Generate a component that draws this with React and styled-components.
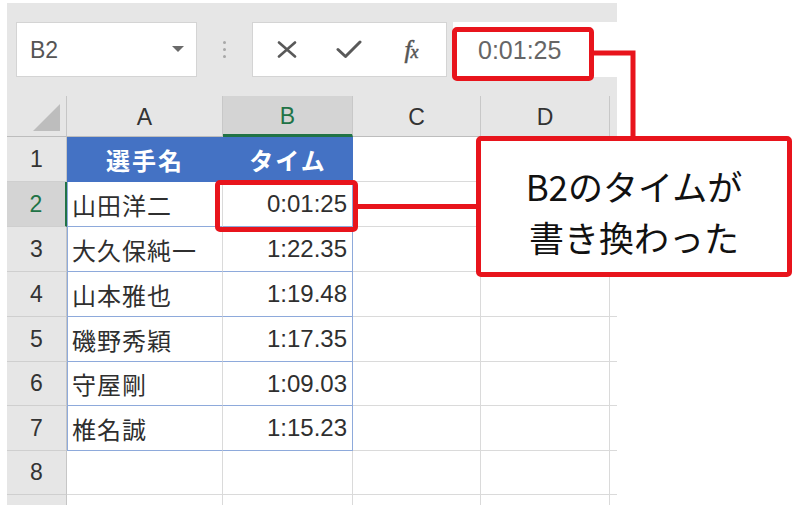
import React from "react";
import styled, { createGlobalStyle, css } from "styled-components";

const RED = "#e8141c";
const GREEN = "#217346";
const GRID = "#dadada";
const TBL = "#8eaadb";

const GlobalStyle = createGlobalStyle`
  html, body { margin: 0; padding: 0; background: #fff; }
  body { font-family: "Liberation Sans", "Noto Sans CJK JP", sans-serif; }
  #root { width: 800px; height: 505px; }
`;

const Stage = styled.div`
  position: relative;
  width: 800px;
  height: 505px;
  overflow: hidden;
  padding: 3px 0 0 7px;
  box-sizing: border-box;
  background: #fff;
`;

const Sheet = styled.div`
  width: 610px;
  display: flex;
  flex-direction: column;
`;

const TopBar = styled.div`
  height: 93px;
  box-sizing: border-box;
  background: #e6e6e6;
  display: flex;
  align-items: flex-start;
  padding: 19px 0 0 9px;
`;

const NameBox = styled.div`
  width: 181px;
  height: 55px;
  box-sizing: border-box;
  background: #fff;
  border: 1px solid #d4d4d4;
  display: flex;
  align-items: center;
  justify-content: space-between;
  padding: 2px 12px 0 13px;
  font-size: 23px;
  color: #555;
`;

const DropArrow = styled.span`
  width: 0;
  height: 0;
  border-left: 6px solid transparent;
  border-right: 6px solid transparent;
  border-top: 6px solid #6a6a6a;
  margin-top: -4px;
`;

const Dots = styled.div`
  width: 55px;
  height: 55px;
  display: flex;
  flex-direction: column;
  align-items: center;
  justify-content: center;
  gap: 4px;
  & > span {
    width: 3px;
    height: 3px;
    border-radius: 50%;
    background: #a8a8a8;
  }
`;

const FxBox = styled.div`
  width: 195px;
  height: 55px;
  box-sizing: border-box;
  background: #fff;
  border: 1px solid #d4d4d4;
  display: flex;
  align-items: center;
  padding-left: 3px;
`;

const IconSlot = styled.div`
  width: 62px;
  height: 100%;
  display: flex;
  align-items: center;
  justify-content: center;
  color: #5a5a5a;
`;

const FxText = styled.span`
  font-family: "Liberation Serif", "DejaVu Serif", serif;
  font-style: italic;
  font-size: 25px;
  color: #555;
  letter-spacing: -1px;
  -webkit-text-stroke: 0.5px #555;
  & > small { font-size: 18px; }
`;

const FormulaInput = styled.div`
  flex: 1;
  margin-left: 6px;
  height: 55px;
  background: #fff;
  display: flex;
  align-items: center;
  padding: 2px 0 0 25px;
  box-sizing: border-box;
  font-size: 25px;
  color: #666;
`;

const Grid = styled.div`
  display: grid;
  grid-template-columns: 60px 156px 130px 128px 129px 7px;
  grid-template-rows: 41px 45px 45px 45px 45px 45px 44px 45px 44px 20px;
`;

const base = css`
  box-sizing: border-box;
  display: flex;
  align-items: center;
  overflow: hidden;
  white-space: nowrap;
`;

const Corner = styled.div`
  ${base};
  background: #e6e6e6;
  border-right: 1px solid #c6c6c6;
  border-bottom: 1px solid #bdbdbd;
  justify-content: flex-end;
  align-items: flex-end;
  padding: 0 6px 5px 0;
  &::after {
    content: "";
    width: 27px;
    height: 27px;
    background: #bdbdbd;
    clip-path: polygon(100% 0, 100% 100%, 0 100%);
  }
`;

const ColHead = styled.div`
  ${base};
  justify-content: center;
  font-size: 23px;
  padding-top: 2px;
  background: ${(p) => (p.$active ? "#d4d4d4" : "#e6e6e6")};
  color: ${(p) => (p.$active ? GREEN : "#333")};
  border-right: ${(p) => (p.$last ? "none" : "1px solid #c8c8c8")};
  border-bottom: ${(p) =>
    p.$active ? `3px solid ${GREEN}` : "1px solid #bdbdbd"};
`;

const RowHead = styled.div`
  ${base};
  justify-content: center;
  font-size: 23px;
  background: ${(p) => (p.$active ? "#d4d4d4" : "#e6e6e6")};
  color: ${(p) => (p.$active ? GREEN : "#333")};
  border-right: ${(p) =>
    p.$active ? `2px solid ${GREEN}` : "1px solid #c6c6c6"};
  border-bottom: 1px solid #cfcfcf;
`;

const Cell = styled.div`
  ${base};
  background: #fff;
  border-right: ${(p) => (p.$last ? "none" : `1px solid ${GRID}`)};
  border-bottom: 1px solid ${GRID};
`;

const Th = styled.div`
  ${base};
  justify-content: center;
  background: #4472c4;
  color: #fff;
  font-weight: 700;
  font-size: 24px;
  letter-spacing: 2px;
  font-family: "Noto Sans CJK JP", sans-serif;
  border-bottom: 1px solid #4472c4;
`;

const Td = styled.div`
  ${base};
  background: #fff;
  font-size: 24px;
  color: #2f2f2f;
  font-family: "Liberation Sans", "Noto Sans CJK JP", sans-serif;
  border-bottom: 1px solid ${TBL};
  ${(p) =>
    p.$num
      ? css`
          justify-content: flex-end;
          padding-right: 5px;
          border-right: 1px solid ${TBL};
        `
      : css`
          justify-content: flex-start;
          padding-left: 5px;
          letter-spacing: 1px;
          border-right: 1px solid ${GRID};
          box-shadow: inset 1px 0 0 ${TBL};
        `}
`;

const Mark = styled.div`
  position: absolute;
  box-sizing: border-box;
  border: 5px solid ${RED};
  border-radius: 5px;
  left: ${(p) => p.$x}px;
  top: ${(p) => p.$y}px;
  width: ${(p) => p.$w}px;
  height: ${(p) => p.$h}px;
`;

const Callout = styled(Mark)`
  background: #fff;
  display: flex;
  align-items: center;
  justify-content: center;
  padding-top: 8px;
`;

const CalloutText = styled.p`
  margin: 0;
  text-align: center;
  font-family: "Noto Sans CJK JP", sans-serif;
  font-size: 35px;
  line-height: 51px;
  color: #111;
`;

const Wires = styled.svg`
  position: absolute;
  left: 0;
  top: 0;
  pointer-events: none;
`;

const rows = [
  ["山田洋二", "0:01:25"],
  ["大久保純一", "1:22.35"],
  ["山本雅也", "1:19.48"],
  ["磯野秀穎", "1:17.35"],
  ["守屋剛", "1:09.03"],
  ["椎名誠", "1:15.23"],
];

export default function App() {
  return (
    <>
      <GlobalStyle />
      <Stage>
        <Sheet>
          <TopBar>
            <NameBox>
              <span>B2</span>
              <DropArrow />
            </NameBox>
            <Dots>
              <span />
              <span />
              <span />
            </Dots>
            <FxBox>
              <IconSlot>
                <svg width="20" height="17" viewBox="0 0 20 17">
                  <path d="M2 1.5 L18 15.5 M18 1.5 L2 15.5" stroke="#595959" strokeWidth="2.6" strokeLinecap="round" fill="none" />
                </svg>
              </IconSlot>
              <IconSlot>
                <svg width="26" height="19" viewBox="0 0 26 19">
                  <path d="M2 9.5 L9.5 16.5 L24 2" stroke="#595959" strokeWidth="3" strokeLinecap="round" strokeLinejoin="round" fill="none" />
                </svg>
              </IconSlot>
              <IconSlot>
                <FxText>
                  f<small>x</small>
                </FxText>
              </IconSlot>
            </FxBox>
            <FormulaInput>0:01:25</FormulaInput>
          </TopBar>
          <Grid>
            <Corner />
            <ColHead>A</ColHead>
            <ColHead $active>B</ColHead>
            <ColHead>C</ColHead>
            <ColHead>D</ColHead>
            <ColHead $last />

            <RowHead>1</RowHead>
            <Th>選手名</Th>
            <Th>タイム</Th>
            <Cell />
            <Cell />
            <Cell $last />

            {rows.map(([name, time], i) => (
              <React.Fragment key={name}>
                <RowHead $active={i === 0}>{i + 2}</RowHead>
                <Td>{name}</Td>
                <Td $num>{time}</Td>
                <Cell />
                <Cell />
                <Cell $last />
              </React.Fragment>
            ))}

            {[8, 9].map((n) => (
              <React.Fragment key={n}>
                <RowHead>{n === 8 ? n : ""}</RowHead>
                <Cell />
                <Cell />
                <Cell />
                <Cell />
                <Cell $last />
              </React.Fragment>
            ))}
          </Grid>
        </Sheet>

        <Wires width="800" height="505" viewBox="0 0 800 505">
          <polyline points="592,53 633,53 633,138" stroke={RED} strokeWidth="5" fill="none" />
          <line x1="356" y1="206.5" x2="478" y2="206.5" stroke={RED} strokeWidth="5" />
        </Wires>
        <Mark $x={452} $y={27} $w={142} $h={54} />
        <Mark $x={215} $y={180} $w={143} $h={52} />
        <Callout $x={476} $y={136} $w={316} $h={141}>
          <CalloutText>
            B2のタイムが
            <br />
            書き換わった
          </CalloutText>
        </Callout>
      </Stage>
    </>
  );
}
